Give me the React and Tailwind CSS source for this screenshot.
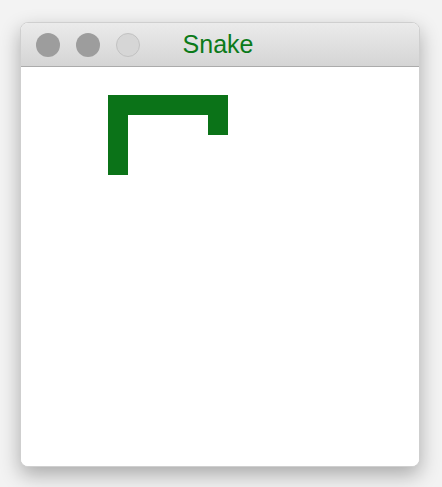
import React from 'react';

const Snake = () => (
    <svg width="140" height="90" viewBox="0 0 140 90" className="block">
        <rect x="0" y="0" width="120" height="20" fill="#0b7318" />
        <rect x="0" y="0" width="20" height="80" fill="#0b7318" />
        <rect x="100" y="0" width="20" height="40" fill="#0b7318" />
    </svg>
);

const App = () => {
    return (
        <div className="w-[442px] h-[487px] bg-[#f3f3f3] pt-[22px] pl-[20px]">
            <div className="w-[400px] h-[445px] rounded-[8px] bg-white overflow-hidden shadow-[0_8px_20px_rgba(0,0,0,0.3)] border border-[#cfcfcf] flex flex-col">
                <div className="relative h-[44px] bg-gradient-to-b from-[#ebebeb] to-[#d5d5d5] border-b border-[#ababab] flex items-center pl-[15px] gap-[16px] shrink-0">
                    <div className="w-[24px] h-[24px] rounded-full bg-[#9d9d9d]" />
                    <div className="w-[24px] h-[24px] rounded-full bg-[#9d9d9d]" />
                    <div className="w-[24px] h-[24px] rounded-full bg-[#d6d6d6] border border-[#c2c2c2]" />
                    <div
                        className="absolute inset-0 flex items-center justify-center pr-[4px] text-[25px] text-[#0b7a19] leading-none"
                        style={{ fontFamily: '"Liberation Sans", Arial, sans-serif' }}
                    >
                        Snake
                    </div>
                </div>
                <div className="flex-1 bg-white pt-[28px] pl-[87px]">
                    <Snake />
                </div>
            </div>
        </div>
    );
};

export default App;
